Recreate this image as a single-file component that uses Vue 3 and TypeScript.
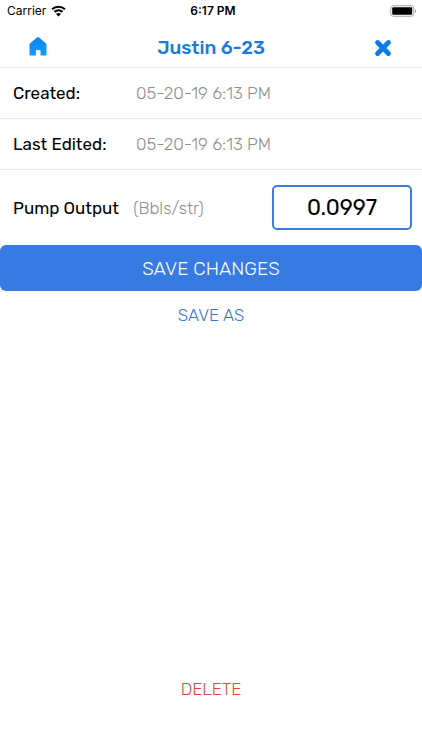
<script setup lang="ts">
import { ref } from 'vue'

interface Detail {
  label: string
  value: string
}

const title = 'Justin 6-23'
const details: Detail[] = [
  { label: 'Created:', value: '05-20-19 6:13 PM' },
  { label: 'Last Edited:', value: '05-20-19 6:13 PM' },
]
const pumpOutput = ref('0.0997')
</script>

<template>
  <div class="screen">
    <div class="status">
      <div class="carrier">
        <span>Carrier</span>
        <svg class="wifi" viewBox="0 0 14 11" aria-hidden="true">
          <path d="M1 3.9C4.4.7 9.6.7 13 3.9" />
          <path d="M3.2 6.3c2.2-2 5.4-2 7.6 0" />
          <path class="dot" d="M4.7 8.2c1.3-1.2 3.3-1.2 4.6 0L7 10.6z" />
        </svg>
      </div>
      <span class="time">6:17 PM</span>
      <svg class="battery" viewBox="0 0 27 12" aria-hidden="true">
        <rect x=".75" y=".75" width="23" height="10.5" rx="2.5" fill="#fff" stroke="#a3a3a3" />
        <rect x="2.2" y="2.2" width="20" height="7.6" rx="1" fill="#000" />
        <path d="M25 4v4c1.7-.6 1.7-3.4 0-4z" fill="#a3a3a3" />
      </svg>
    </div>

    <header class="nav">
      <button class="icon-button" type="button" aria-label="Home">
        <svg class="home" viewBox="0 0 18 19" aria-hidden="true">
          <defs>
            <linearGradient id="home-fill" x1="0" y1="0" x2="0" y2="1">
              <stop offset="0" stop-color="#0a84f2" />
              <stop offset="1" stop-color="#149cff" />
            </linearGradient>
          </defs>
          <path
            fill="url(#home-fill)"
            d="M8 .5q1-.8 2 0l6.800 5.700q.7.600.7 1.500v10q0 .800-.800.800H11.500v-4.600q0-.900-.900-.900H7.800q-.900 0-.900.900v4.600H1.300Q.5 18.500.5 17.700V7.700q0-.900.700-1.500z"
          />
        </svg>
      </button>
      <h1 class="title">{{ title }}</h1>
      <button class="icon-button" type="button" aria-label="Close">
        <svg class="close" viewBox="0 0 18 18" aria-hidden="true">
          <path d="M3.600 3.600l10.800 10.800M14.400 3.600L3.600 14.400" />
        </svg>
      </button>
    </header>

    <dl class="details">
      <div v-for="item in details" :key="item.label" class="row">
        <dt>{{ item.label }}</dt>
        <dd>{{ item.value }}</dd>
      </div>
    </dl>

    <form class="form" @submit.prevent>
      <div class="field">
        <label for="pump-output">Pump Output <span class="unit">(Bbls/str)</span></label>
        <input id="pump-output" v-model="pumpOutput" type="text" inputmode="decimal" />
      </div>
      <button class="save" type="submit">SAVE CHANGES</button>
      <button class="link" type="button">SAVE AS</button>
    </form>

    <button class="link delete" type="button">DELETE</button>
  </div>
</template>

<style>
body {
  margin: 0;
  background: #fff;
}
</style>

<style scoped>
.screen {
  display: flex;
  flex-direction: column;
  min-height: 100vh;
  box-sizing: border-box;
  padding-bottom: 40px;
  background: #fff;
  color: #000;
  font-family: Rubik, Roboto, sans-serif;
  font-size: 17px;
  line-height: 20px;
}

button,
input {
  box-sizing: border-box;
  font-family: inherit;
}

button {
  margin: 0;
  padding: 0;
  border: 0;
  background: none;
  cursor: pointer;
}

.status {
  display: grid;
  grid-template-columns: 1fr auto 1fr;
  align-items: center;
  height: 22px;
  padding: 0 5px 0 7px;
  font-family: Inter, sans-serif;
  font-size: 12px;
  line-height: 22px;
}

.carrier {
  display: flex;
  align-items: center;
  gap: 5px;
}

.wifi {
  width: 15px;
  height: 12px;
  fill: none;
  stroke: #000;
  stroke-width: 2;
}

.wifi .dot {
  fill: #000;
  stroke: none;
}

.time {
  padding-left: 2px;
  font-weight: 600;
}

.battery {
  justify-self: end;
  width: 27px;
  height: 12px;
}

.nav {
  display: flex;
  align-items: center;
  justify-content: space-between;
  height: 46px;
  box-sizing: border-box;
  padding: 4px 20px 0;
  border-bottom: 1px solid #e8e8e8;
}

.icon-button {
  display: flex;
  align-items: center;
  justify-content: center;
  width: 36px;
  height: 36px;
}

.home {
  width: 18px;
  height: 19px;
}

.close {
  width: 18px;
  height: 18px;
  margin: 2px 2px 0 0;
  stroke: #0c7ce6;
  stroke-width: 5;
  stroke-linecap: round;
}

.title {
  margin: 0;
  padding-top: 2px;
  color: #177be0;
  font-size: 19px;
  font-weight: 500;
  line-height: 24px;
}

.details {
  margin: 0;
}

.row {
  display: grid;
  grid-template-columns: 123px 1fr;
  align-items: center;
  height: 51px;
  box-sizing: border-box;
  padding: 0 13px;
  border-bottom: 1px solid #ececec;
}

dd {
  margin: 0;
  color: #8e8e8e;
  font-weight: 300;
}

.form {
  display: flex;
  flex-direction: column;
}

.field {
  display: flex;
  align-items: center;
  justify-content: space-between;
  padding: 15px 10px 15px 13px;
}

.unit {
  margin-left: 10px;
  color: #8e8e8e;
  font-weight: 300;
}

.field input {
  width: 140px;
  height: 45px;
  padding: 0;
  border: 2px solid #3b7ddd;
  border-radius: 5px;
  background: #fff;
  color: #000;
  font-size: 22px;
  text-align: center;
}

.save {
  height: 46px;
  border-radius: 6px;
  background: #377be2;
  color: #fff;
  font-size: 19px;
  font-weight: 300;
}

.link {
  align-self: center;
  padding: 13px 16px;
  color: #3674d9;
  font-size: 17px;
  font-weight: 300;
  line-height: 22px;
}

.delete {
  margin-top: auto;
  padding: 10px 16px;
  color: #e0463e;
}
</style>
